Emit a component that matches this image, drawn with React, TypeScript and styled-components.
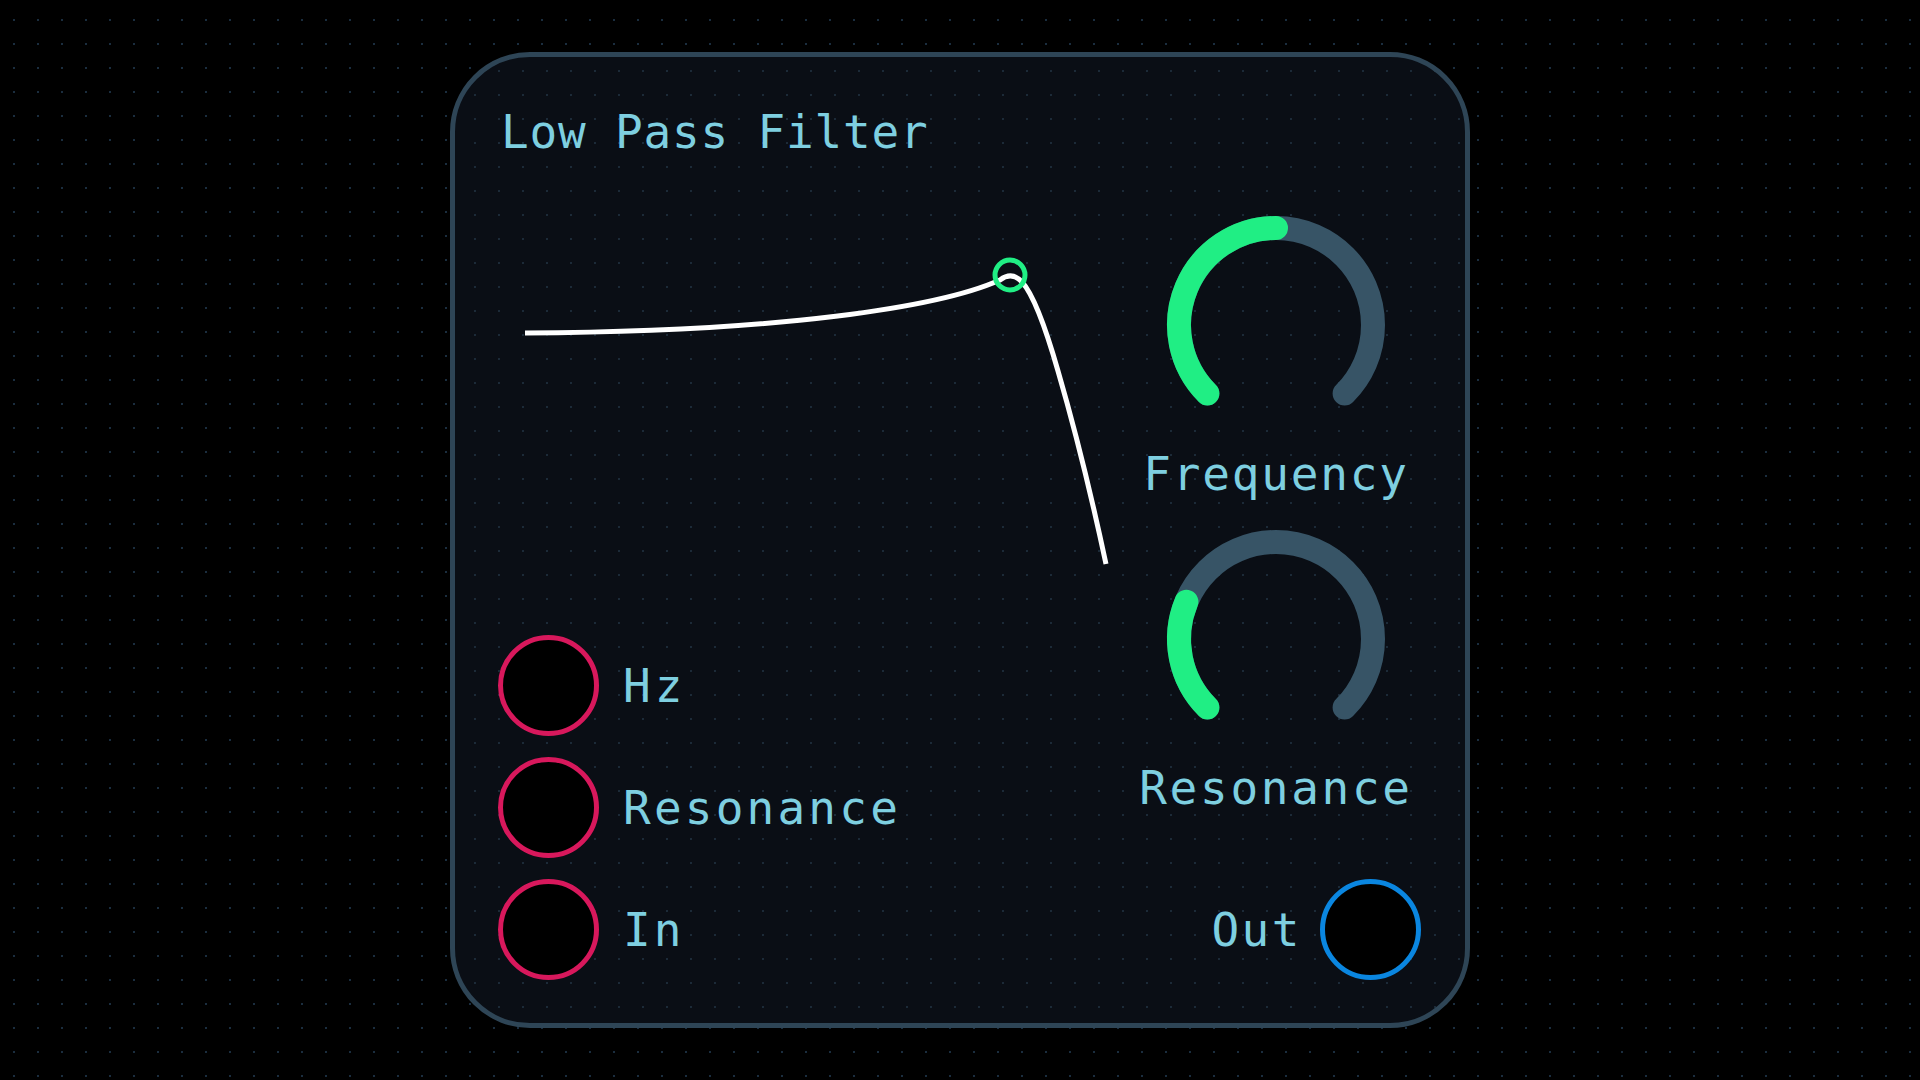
import React from "react";
import styled, { createGlobalStyle } from "styled-components";

const GlobalStyle = createGlobalStyle`
  html, body {
    margin: 0;
    padding: 0;
    background: #000;
  }
  body {
    font-family: "DejaVu Sans Mono", "Liberation Mono", monospace;
  }
`;

const Page = styled.div`
  width: 100vw;
  height: 100vh;
  display: flex;
  align-items: center;
  justify-content: center;
  background-color: #000;
  background-image: radial-gradient(circle, rgba(70, 120, 165, 0.38) 0.9px, transparent 1.4px);
  background-size: 24px 24px;
  background-position: 2px 8px;
`;

const Card = styled.section`
  box-sizing: border-box;
  width: 1020px;
  height: 976px;
  border: 5px solid #2e4556;
  border-radius: 80px;
  background-color: #0a0e15;
  background-image: radial-gradient(circle, rgba(60, 95, 120, 0.35) 0.9px, transparent 1.4px);
  background-size: 24px 24px;
  background-position: 8px 2px;
  padding: 52px 43px 43px;
  display: flex;
  flex-direction: column;
`;

const Title = styled.h1`
  margin: 0 0 0 3px;
  font-family: "DejaVu Sans Mono", "Liberation Mono", monospace;
  font-weight: normal;
  font-size: 46px;
  line-height: 46px;
  letter-spacing: 0.8px;
  color: #7ecfe0;
`;

const Body = styled.div`
  flex: 1;
  display: grid;
  grid-template-columns: 1fr 296px;
  min-height: 0;
  margin-top: -1px;
`;

const LeftColumn = styled.div`
  display: flex;
  flex-direction: column;
  justify-content: space-between;
`;

const Graph = styled.svg`
  display: block;
  width: 630px;
  height: 440px;
`;

const JackList = styled.div`
  display: flex;
  flex-direction: column;
  gap: 21px;
`;

const JackRow = styled.div<{ $reverse?: boolean }>`
  display: flex;
  align-items: center;
  gap: ${(p) => (p.$reverse ? "18px" : "24px")};
  justify-content: ${(p) => (p.$reverse ? "flex-end" : "flex-start")};
`;

const Jack = styled.div<{ $color: string }>`
  box-sizing: border-box;
  width: 101px;
  height: 101px;
  border-radius: 50%;
  border: 5px solid ${(p) => p.$color};
  background: #000;
  flex: none;
`;

const Label = styled.span<{ $spacing?: number }>`
  font-family: "DejaVu Sans Mono", "Liberation Mono", monospace;
  font-size: 46px;
  line-height: 46px;
  letter-spacing: ${(p) => p.$spacing ?? 2.5}px;
  color: #7ecfe0;
  white-space: nowrap;
`;

const RightColumn = styled.div`
  display: flex;
  flex-direction: column;
  align-items: center;
  padding-top: 51px;
`;

const KnobBlock = styled.div`
  display: flex;
  flex-direction: column;
  align-items: center;
  gap: 6px;
  & + & {
    margin-top: 22px;
  }
`;

const KnobSvg = styled.svg`
  display: block;
  width: 240px;
  height: 240px;
`;

const OutRow = styled(JackRow)`
  align-self: stretch;
  margin-top: auto;
  padding-right: 3px;
`;

const CX = 120;
const CY = 120;
const R = 97;

function pt(deg: number) {
  const a = (deg * Math.PI) / 180;
  return [CX + R * Math.cos(a), CY + R * Math.sin(a)];
}

function arc(from: number, to: number) {
  const [x1, y1] = pt(from);
  const [x2, y2] = pt(to);
  const large = to - from > 180 ? 1 : 0;
  return `M ${x1.toFixed(2)} ${y1.toFixed(2)} A ${R} ${R} 0 ${large} 1 ${x2.toFixed(2)} ${y2.toFixed(2)}`;
}

function Knob({ value, label, spacing }: { value: number; label: string; spacing?: number }) {
  const start = 135;
  const end = start + 270 * value;
  return (
    <KnobBlock>
      <KnobSvg viewBox="0 0 240 240">
        <path d={arc(135, 404.99)} fill="none" stroke="#375466" strokeWidth={24} strokeLinecap="round" />
        <path d={arc(start, end)} fill="none" stroke="#20ee84" strokeWidth={24} strokeLinecap="round" />
      </KnobSvg>
      <Label $spacing={spacing}>{label}</Label>
    </KnobBlock>
  );
}

export default function App() {
  return (
    <>
      <GlobalStyle />
      <Page>
        <Card>
          <Title>Low Pass Filter</Title>
          <Body>
            <LeftColumn>
              <Graph viewBox="498 155 630 440">
                <path
                  d="M525 334 C780 333 940 308 1000 281 Q1012 272 1022 283 C1034 296 1046 330 1058 372 C1072 420 1090 490 1106 565"
                  fill="none"
                  stroke="#ffffff"
                  strokeWidth={5}
                />
                <circle cx={1010} cy={276} r={15} fill="none" stroke="#20ee84" strokeWidth={5} />
              </Graph>
              <JackList>
                <JackRow>
                  <Jack $color="#d8185c" />
                  <Label $spacing={4}>Hz</Label>
                </JackRow>
                <JackRow>
                  <Jack $color="#d8185c" />
                  <Label $spacing={3.2}>Resonance</Label>
                </JackRow>
                <JackRow>
                  <Jack $color="#d8185c" />
                  <Label $spacing={3}>In</Label>
                </JackRow>
              </JackList>
            </LeftColumn>
            <RightColumn>
              <Knob value={0.5} label="Frequency" spacing={1.8} />
              <Knob value={0.25} label="Resonance" spacing={2.7} />
              <OutRow $reverse>
                <Label $spacing={2.5}>Out</Label>
                <Jack $color="#0a86e0" />
              </OutRow>
            </RightColumn>
          </Body>
        </Card>
      </Page>
    </>
  );
}
